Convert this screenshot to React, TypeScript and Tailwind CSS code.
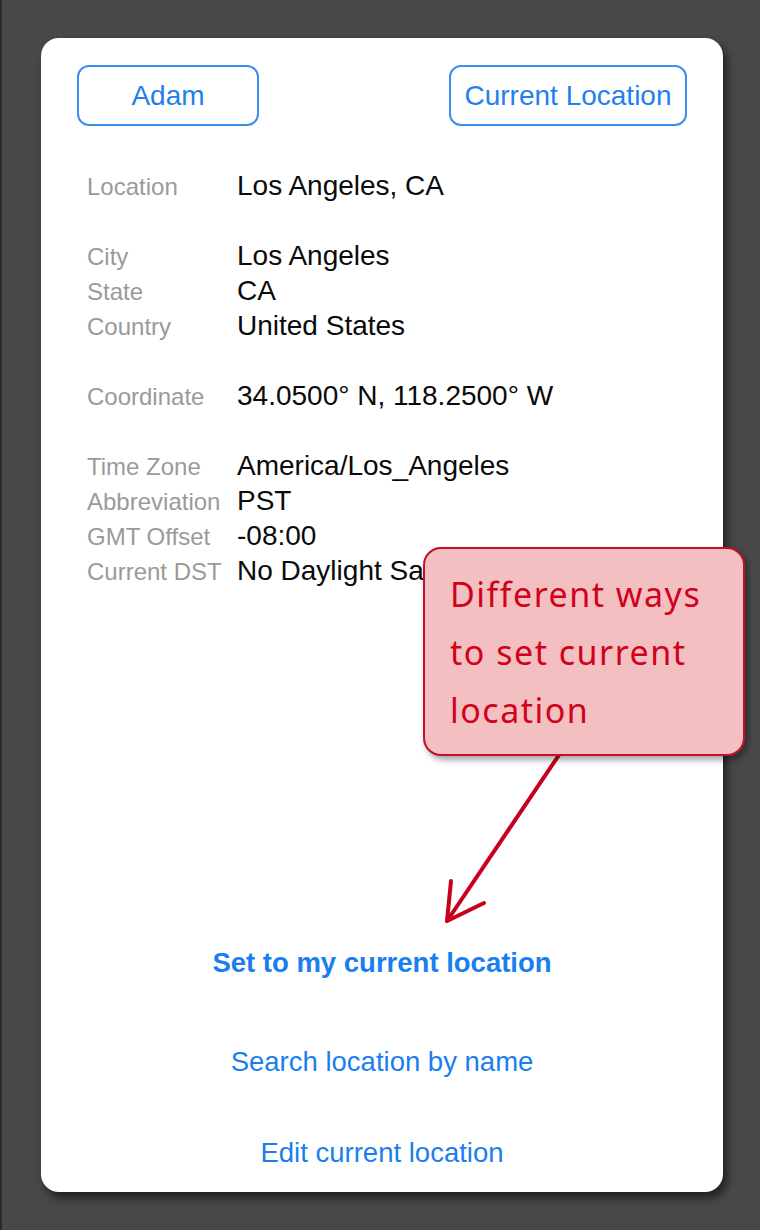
import React from "react"

const groups = [
  [{ label: "Location", value: "Los Angeles, CA" }],
  [
    { label: "City", value: "Los Angeles" },
    { label: "State", value: "CA" },
    { label: "Country", value: "United States" },
  ],
  [{ label: "Coordinate", value: "34.0500° N, 118.2500° W" }],
  [
    { label: "Time Zone", value: "America/Los_Angeles" },
    { label: "Abbreviation", value: "PST" },
    { label: "GMT Offset", value: "-08:00" },
    { label: "Current DST", value: "No Daylight Saving Time" },
  ],
]

const sans = "font-['Liberation_Sans',Arial,sans-serif]"

export default function App() {
  return (
    <div className={`relative w-[760px] h-[1230px] overflow-hidden bg-[#484848] border-l-2 border-[#2a2a2a] ${sans}`}>
      <div className="pt-[38px] pl-[39px]">
        <div className="flex flex-col w-[682px] h-[1154px] bg-white rounded-[18px] shadow-[4px_6px_8px_rgba(0,0,0,0.55)] px-[36px] pt-[27px] pb-[22px]">
          {/* top buttons */}
          <div className="flex justify-between">
            <button className="w-[182px] h-[61px] rounded-[12px] border-2 border-[#3b8ff0] text-[#1f80ee] text-[28px]">
              Adam
            </button>
            <button className="w-[238px] h-[61px] rounded-[12px] border-2 border-[#3b8ff0] text-[#1f80ee] text-[28px]">
              Current Location
            </button>
          </div>

          {/* details */}
          <div className="mt-[42px] pl-[10px] flex flex-col gap-[35px]">
            {groups.map((rows, gi) => (
              <div key={gi} className="flex flex-col">
                {rows.map((row) => (
                  <div key={row.label} className="flex items-baseline h-[35px] leading-[35px] whitespace-nowrap">
                    <span className="w-[150px] shrink-0 text-[24px] text-[#9a9a9a]">{row.label}</span>
                    <span className="text-[28px] text-[#0a0a0a]">{row.value}</span>
                  </div>
                ))}
              </div>
            ))}
          </div>

          {/* actions */}
          <div className="mt-auto flex flex-col items-center text-[#1a7eef] text-[27.5px] leading-[35px]">
            <button className="h-[35px] font-bold">Set to my current location</button>
            <button className="h-[35px] mt-[64px]">Search location by name</button>
            <button className="h-[35px] mt-[56px]">Edit current location</button>
          </div>
        </div>
      </div>

      {/* annotation arrow */}
      <svg className="absolute -left-[2px] top-0 pointer-events-none" width="760" height="1230" viewBox="0 0 760 1230">
        <g stroke="#c8001e" strokeWidth="4" fill="none" strokeLinecap="round" strokeLinejoin="round">
          <path d="M561 752 L447 921" />
          <path d="M451 881 L447 921 L484 903" />
        </g>
      </svg>

      {/* annotation callout */}
      <div className="absolute left-[421px] top-[547px] w-[322px] h-[209px] rounded-[18px] border-2 border-[#c0102a] bg-[#f4bfc1] shadow-[3px_4px_6px_rgba(0,0,0,0.35)] pl-[25px] pt-[16px] text-[#d0021b] text-[34px] tracking-[1.5px] leading-[58px] font-['Comic_Sans_MS','Noto_Sans',sans-serif]">
        Different ways
        <br />
        to set current
        <br />
        location
      </div>
    </div>
  )
}
